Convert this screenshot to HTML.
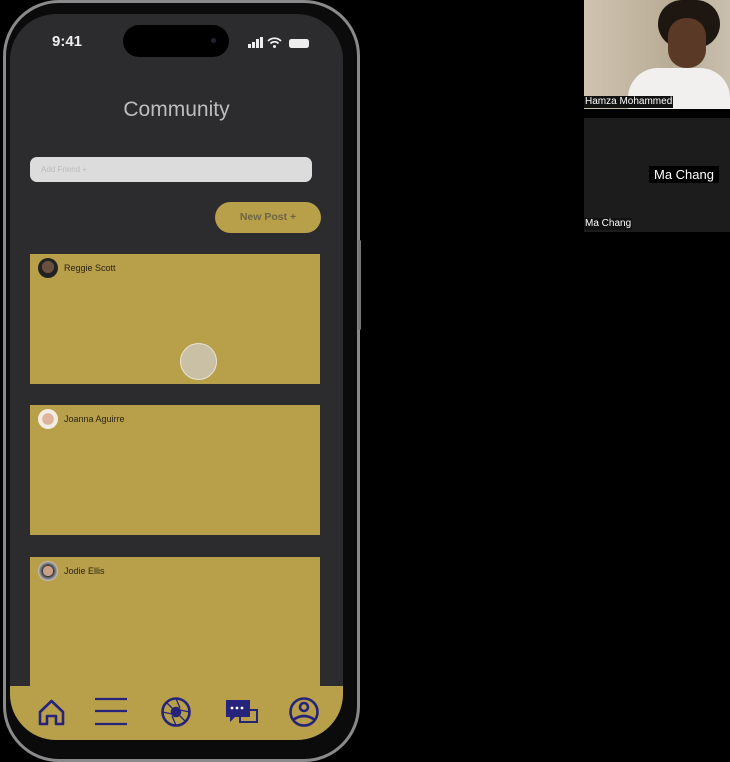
<!DOCTYPE html>
<html><head><style>
*{margin:0;padding:0;box-sizing:border-box}
body{width:730px;height:754px;background:#000;position:relative;overflow:hidden;font-family:"Liberation Sans",sans-serif}
.phone{position:absolute;left:3px;top:0;width:357px;height:762px;border-radius:56px;border:3px solid #8a8a8c;background:#0b0b0c}
.screen{position:absolute;left:10px;top:14px;width:333px;height:726px;border-radius:46px;background:#2c2c2e;overflow:hidden}
.a{position:absolute}
.card{position:absolute;left:20px;width:290px;height:130px;background:#b89f4a}
.av{position:absolute;left:8px;top:4px;width:20px;height:20px;border-radius:50%}
.nm{position:absolute;left:34px;top:9px;font-size:9px;color:#2a2410}
</style></head><body>
<div class="phone"></div>
<div class="a" style="left:358px;top:240px;width:3px;height:90px;background:#777;border-radius:2px"></div>
<div class="screen">
 <div class="a" style="left:42px;top:19px;color:#eee;font-size:15px;font-weight:bold">9:41</div>
 <div class="a" style="left:113px;top:11px;width:106px;height:32px;border-radius:16px;background:#000"></div>
 <div class="a" style="left:201px;top:24px;width:5px;height:5px;border-radius:50%;background:#223"></div>
 <svg class="a" style="left:238px;top:22px" width="70" height="14">
  <rect x="0" y="8" width="3" height="4" fill="#eee"/><rect x="4" y="6" width="3" height="6" fill="#eee"/><rect x="8" y="3" width="3" height="9" fill="#eee"/><rect x="12" y="1" width="3" height="11" fill="#eee"/>
  <path d="M20 5 A9 9 0 0 1 33 5 M22.5 7.5 A5.5 5.5 0 0 1 30.5 7.5" stroke="#eee" stroke-width="1.8" fill="none"/><circle cx="26.5" cy="10.5" r="1.5" fill="#eee"/>
  <rect x="41" y="3" width="20" height="9" rx="2.5" fill="#eee"/>
 </svg>
 <div class="a" style="left:0;width:333px;top:84px;text-align:center;color:#bdbdbd;font-size:21px">Community</div>
 <div class="a" style="left:20px;top:143px;width:282px;height:25px;border-radius:7px;background:#dcdcdc;color:#bbb;font-size:8px;padding:8px 11px">Add Friend +</div>
 <div class="a" style="left:205px;top:188px;width:106px;height:31px;border-radius:16px;background:#b89f4a;color:#6e6545;font-size:10.5px;font-weight:bold;text-align:center;line-height:31px">New Post +</div>
 <div class="card" style="top:240px"><div class="av" style="background:radial-gradient(circle at 50% 45%,#6a5040 40%,#222 42%)"></div><div class="nm">Reggie Scott</div>
  <div class="a" style="left:150px;top:89px;width:37px;height:37px;border-radius:50%;background:#c9c0a6;border:1.5px solid #e8e3d6"></div></div>
 <div class="card" style="top:391px"><div class="av" style="background:radial-gradient(circle at 50% 50%,#e0b49a 40%,#f3ece4 42%)"></div><div class="nm">Joanna Aguirre</div></div>
 <div class="card" style="top:543px"><div class="av" style="background:radial-gradient(circle at 50% 50%,#c8a08a 35%,#333 37%,#eee 80%)"></div><div class="nm">Jodie Ellis</div></div>
 <div class="a" style="left:0;top:672px;width:333px;height:60px;background:#b89f4a"></div>
 <svg class="a" style="left:0;top:672px" width="333" height="54" fill="none" stroke="#25237a" stroke-width="2.6">
  <path d="M30 38 V26 L41.5 15 L53 26 V38 H46 V30 H37 V38 Z" stroke-linejoin="round"/>
  <path d="M85 13 H117 M85 25 H117 M85 38 H117" stroke-width="2.2"/>
  <circle cx="166" cy="26" r="13.5"/><circle cx="166" cy="26" r="4" fill="#25237a"/>
  <path d="M166 12.5 L170 22 M179.5 26 L170 24 M166 39.5 L162 30 M152.5 26 L162 28 M156.5 16.5 L163 23 M175.5 35.5 L169 29" stroke-width="1.3"/>
  <rect x="216" y="14" width="24" height="17" fill="#25237a" stroke="none"/><path d="M220 31 V36 L225 31" fill="#25237a" stroke="none"/>
  <rect x="230" y="24" width="17" height="12" stroke-width="2"/>
  <circle cx="222" cy="22" r="1.4" fill="#fff" stroke="none"/><circle cx="227" cy="22" r="1.4" fill="#fff" stroke="none"/><circle cx="232" cy="22" r="1.4" fill="#fff" stroke="none"/>
  <circle cx="294" cy="26" r="13.5"/><circle cx="294" cy="21" r="4"/><path d="M283 34 Q294 26 305 34"/>
 </svg>
</div>
<div class="a" style="left:584px;top:0;width:146px;height:109px;background:linear-gradient(90deg,#cfc4b0,#b8ac96 60%,#c9bfae)"></div>
<div class="a" style="left:658px;top:0;width:62px;height:48px;border-radius:30px;background:#1e1610"></div>
<div class="a" style="left:668px;top:18px;width:38px;height:50px;border-radius:18px;background:#5a3a26"></div>
<div class="a" style="left:628px;top:68px;width:102px;height:41px;border-radius:30px 30px 0 0;background:#f1f0ee"></div>
<div class="a" style="left:584px;top:96px;background:#111;color:#fff;font-size:10px;padding:0 1px;line-height:12px">Hamza Mohammed</div>
<div class="a" style="left:584px;top:118px;width:146px;height:114px;background:#1c1c1c"></div>
<div class="a" style="left:649px;top:166px;background:#000;color:#fff;font-size:13px;padding:0 5px;line-height:17px">Ma Chang</div>
<div class="a" style="left:584px;top:218px;background:#111;color:#fff;font-size:10px;padding:0 1px;line-height:12px">Ma Chang</div>
</body></html>
